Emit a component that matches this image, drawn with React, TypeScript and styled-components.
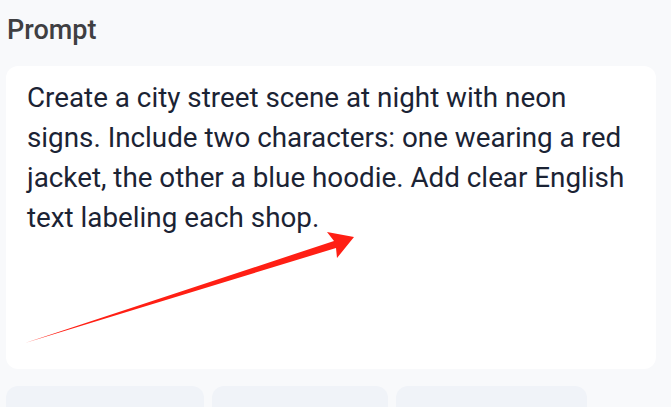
import styled, { createGlobalStyle } from 'styled-components';

const GlobalStyle = createGlobalStyle`
  html, body {
    margin: 0;
    padding: 0;
    background: #f8f9fb;
    font-family: Roboto, "Noto Sans", "Liberation Sans", sans-serif;
  }
  * { box-sizing: border-box; }
`;

const Page = styled.div`
  width: 671px;
  height: 407px;
  overflow: hidden;
  padding: 12px 15px 0 6px;
  display: flex;
  flex-direction: column;
`;

const Title = styled.h2`
  margin: 0 0 0 1px;
  font-size: 27px;
  line-height: 36px;
  font-weight: 500;
  color: #3f3f42;
`;

const PromptCard = styled.div`
  position: relative;
  flex-shrink: 0;
  margin-top: 18px;
  height: 303px;
  background: #ffffff;
  border-radius: 12px;
  padding: 12px 16px 0 21px;
`;

const PromptText = styled.p`
  margin: 0;
  font-size: 27.8px;
  line-height: 40px;
  color: #1b2334;
`;

const Arrow = styled.svg`
  position: absolute;
  left: -6px;
  top: -66px;
  width: 671px;
  height: 407px;
  pointer-events: none;
`;

const OptionRow = styled.div`
  display: flex;
  flex-shrink: 0;
  gap: 8px;
  margin-top: 17px;
`;

const OptionButton = styled.button<{ $w: number; $muted?: boolean }>`
  width: ${p => p.$w}px;
  height: 56px;
  flex-shrink: 0;
  border: none;
  border-radius: 12px;
  background: #f0f3f8;
  font-family: inherit;
  font-size: 20px;
  line-height: 24px;
  font-weight: 500;
  color: ${p => (p.$muted ? '#9aa1ad' : '#1b2334')};
  display: flex;
  align-items: flex-start;
  justify-content: center;
  padding: 17px 0 0;
`;

export default function App() {
  return (
    <>
      <GlobalStyle />
      <Page>
        <Title>Prompt</Title>
        <PromptCard>
          <PromptText>
            Create a city street scene at night with neon signs. Include two characters: one wearing a red
            jacket, the other a blue hoodie. Add clear English text labeling each shop.
          </PromptText>
          <Arrow viewBox="0 0 671 407">
            <polygon
              points="25,343 334,241 327,232 354,237 337,258 336,248"
              fill="#ff1f14"
            />
          </Arrow>
        </PromptCard>
        <OptionRow>
          <OptionButton $w={198}>1:1 Square</OptionButton>
          <OptionButton $w={176} $muted>
            · Portrait
          </OptionButton>
          <OptionButton $w={191}>16:9 Wide</OptionButton>
        </OptionRow>
      </Page>
    </>
  );
}
